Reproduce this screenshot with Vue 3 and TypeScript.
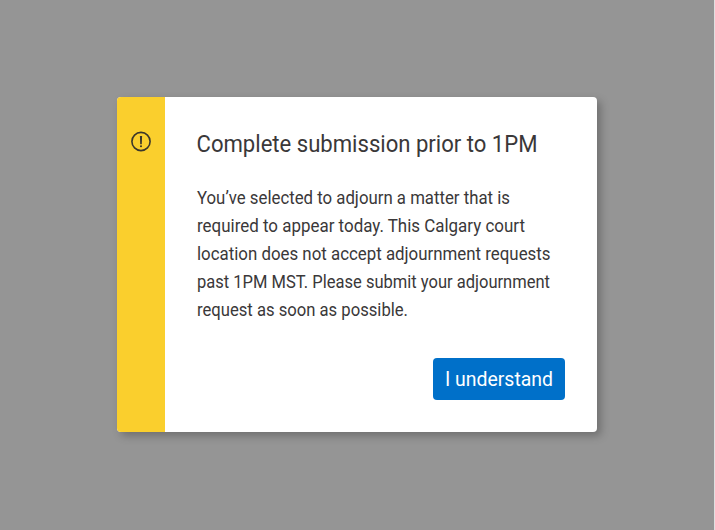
<script setup lang="ts">
const title: string = 'Complete submission prior to 1PM'
const lines: { text: string; width: number }[] = [
  { text: 'You’ve selected to adjourn a matter that is', width: 313 },
  { text: 'required to appear today. This Calgary court', width: 328 },
  { text: 'location does not accept adjournment requests', width: 353.5 },
  { text: 'past 1PM MST. Please submit your adjournment', width: 353 },
  { text: 'request as soon as possible.', width: 211 },
]
</script>

<template>
  <main class="backdrop">
    <section class="dialog" role="alertdialog">
      <div class="stripe">
        <svg width="22" height="22" viewBox="0 0 22 22" fill="none">
          <circle cx="11" cy="10.5" r="9.1" stroke="#3b372b" stroke-width="1.6" />
          <path d="M9.9 4.9h2.2l-.3 8.4h-1.6z" fill="#3b372b" />
          <circle cx="11" cy="15.3" r="1.05" fill="#3b372b" />
        </svg>
      </div>
      <div class="content">
        <svg class="title" width="368" height="32" role="heading">
          <text x="-0.5" y="24" textLength="341" lengthAdjust="spacingAndGlyphs">{{ title }}</text>
        </svg>
        <div class="message">
          <svg v-for="line in lines" :key="line.text" width="368" height="28">
            <text x="0" y="20" :textLength="line.width" lengthAdjust="spacingAndGlyphs">{{ line.text }}</text>
          </svg>
        </div>
        <button type="button">
          <svg width="108" height="28">
            <text x="0" y="21" textLength="108" lengthAdjust="spacingAndGlyphs">I understand</text>
          </svg>
        </button>
      </div>
    </section>
  </main>
</template>

<style>
body { margin: 0; background: #e0e0e0; }
</style>

<style scoped>
.backdrop { box-sizing: border-box; width: 714px; height: 530px; padding: 97px 0 0 117px; background: #959595; font-family: Roboto, sans-serif; }
.dialog { display: flex; width: 480px; height: 335px; overflow: hidden; border-radius: 4px; background: #fff; box-shadow: 4px 4px 8px rgba(0,0,0,.25); }
.stripe { box-sizing: border-box; flex: 0 0 48px; padding: 34px 0 0 13px; background: #facf2d; }
.content { display: flex; flex: 1; flex-direction: column; padding: 31px 32px; }
svg { display: block; overflow: visible; }
.title { font-size: 24px; fill: #3a3839; }
.message { margin-top: 24px; font-size: 18px; fill: #3a3839; }
button { align-self: flex-end; display: flex; align-items: center; justify-content: center; width: 132px; height: 42px; margin-top: 33.5px; padding: 0; border: 0; border-radius: 4px; background: #0070c9; fill: #fff; font: 20px Roboto, sans-serif; }
</style>
